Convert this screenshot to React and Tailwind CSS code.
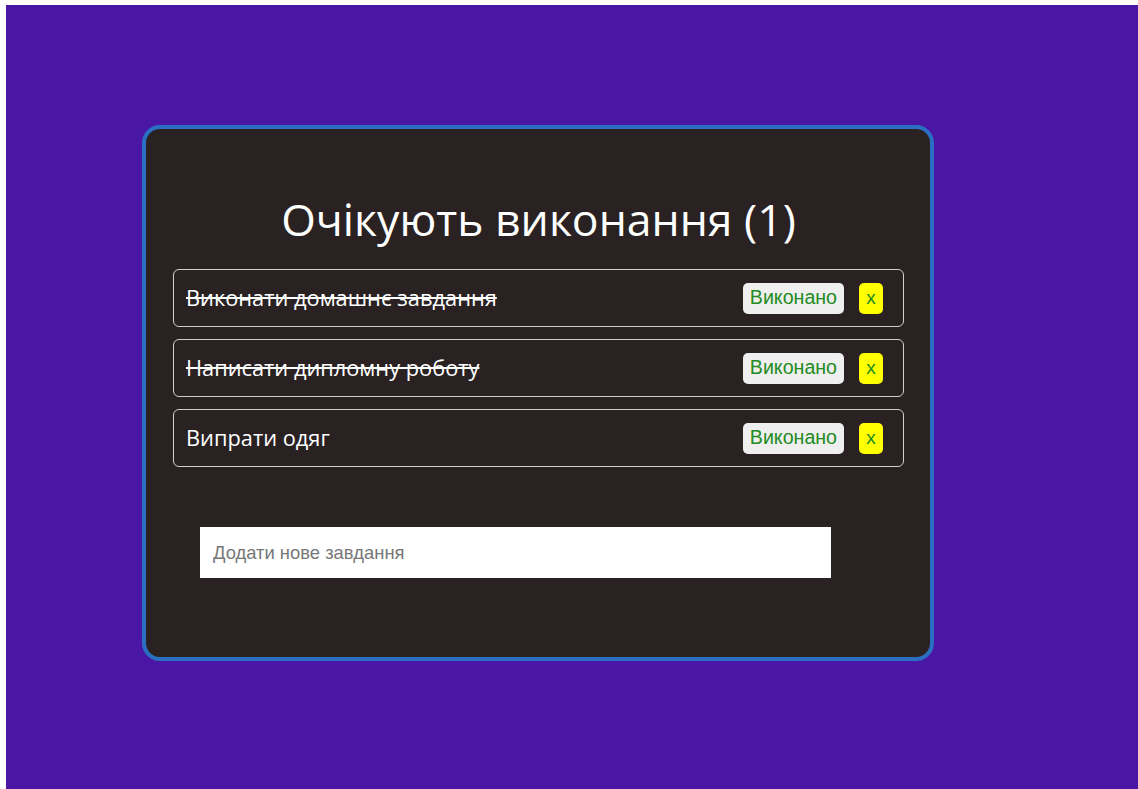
import { useState } from 'react';

const initialTasks = [
  { id: 1, text: 'Виконати домашнє завдання', done: true },
  { id: 2, text: 'Написати дипломну роботу', done: true },
  { id: 3, text: 'Випрати одяг', done: false },
];

const TaskItem = ({ task, onToggle, onRemove }) => (
  <li className="flex items-center h-[58px] border border-[#cfcfcf] rounded-[6px] pl-[12px] pr-[20px]">
    <span
      className={`flex-1 text-[21.8px] text-white font-['Open_Sans',sans-serif] ${
        task.done ? 'line-through' : ''
      }`}
    >
      {task.text}
    </span>
    <button
      onClick={() => onToggle(task.id)}
      className="h-[31px] px-[7px] rounded-[5px] bg-[#efefef] text-[#228b22] text-[19.6px] font-['Liberation_Sans',Arial,sans-serif]"
    >
      Виконано
    </button>
    <button
      onClick={() => onRemove(task.id)}
      className="ml-[15px] h-[31px] w-[24px] rounded-[5px] bg-[#ffff00] text-[#228b22] text-[19px] font-['Liberation_Sans',Arial,sans-serif]"
    >
      x
    </button>
  </li>
);

const App = () => {
  const [tasks, setTasks] = useState(initialTasks);
  const [draft, setDraft] = useState('');

  const pending = tasks.filter((t) => !t.done).length;

  const toggle = (id) =>
    setTasks((prev) => prev.map((t) => (t.id === id ? { ...t, done: !t.done } : t)));
  const remove = (id) => setTasks((prev) => prev.filter((t) => t.id !== id));

  const addTask = (e) => {
    if (e.key !== 'Enter' || !draft.trim()) return;
    setTasks((prev) => [...prev, { id: Date.now(), text: draft.trim(), done: false }]);
    setDraft('');
  };

  return (
    <div className="bg-white pl-[6px] pt-[5px] h-[789px] w-[1138px] overflow-hidden">
      <div className="bg-[#4a17a5] h-full pt-[120px] pl-[136px]">
        <div className="w-[792px] h-[536px] border-4 border-[#2a6fc2] rounded-[18px] bg-[#2a2222] pl-[27px] pr-[26px]">
          <h1 className="text-center text-white text-[44.5px] font-['Open_Sans',sans-serif] mt-[60px] leading-[60px]">
            Очікують виконання ({pending})
          </h1>
          <ul className="mt-[20px] flex flex-col gap-[12px]">
            {tasks.map((task) => (
              <TaskItem key={task.id} task={task} onToggle={toggle} onRemove={remove} />
            ))}
          </ul>
          <input
            value={draft}
            onChange={(e) => setDraft(e.target.value)}
            onKeyDown={addTask}
            placeholder="Додати нове завдання"
            className="mt-[60px] ml-[27px] block w-[631px] h-[51px] bg-white px-[13px] text-[18.4px] text-black placeholder:text-[#777] font-['Liberation_Sans',Arial,sans-serif] outline-none"
          />
        </div>
      </div>
    </div>
  );
};

export default App;
